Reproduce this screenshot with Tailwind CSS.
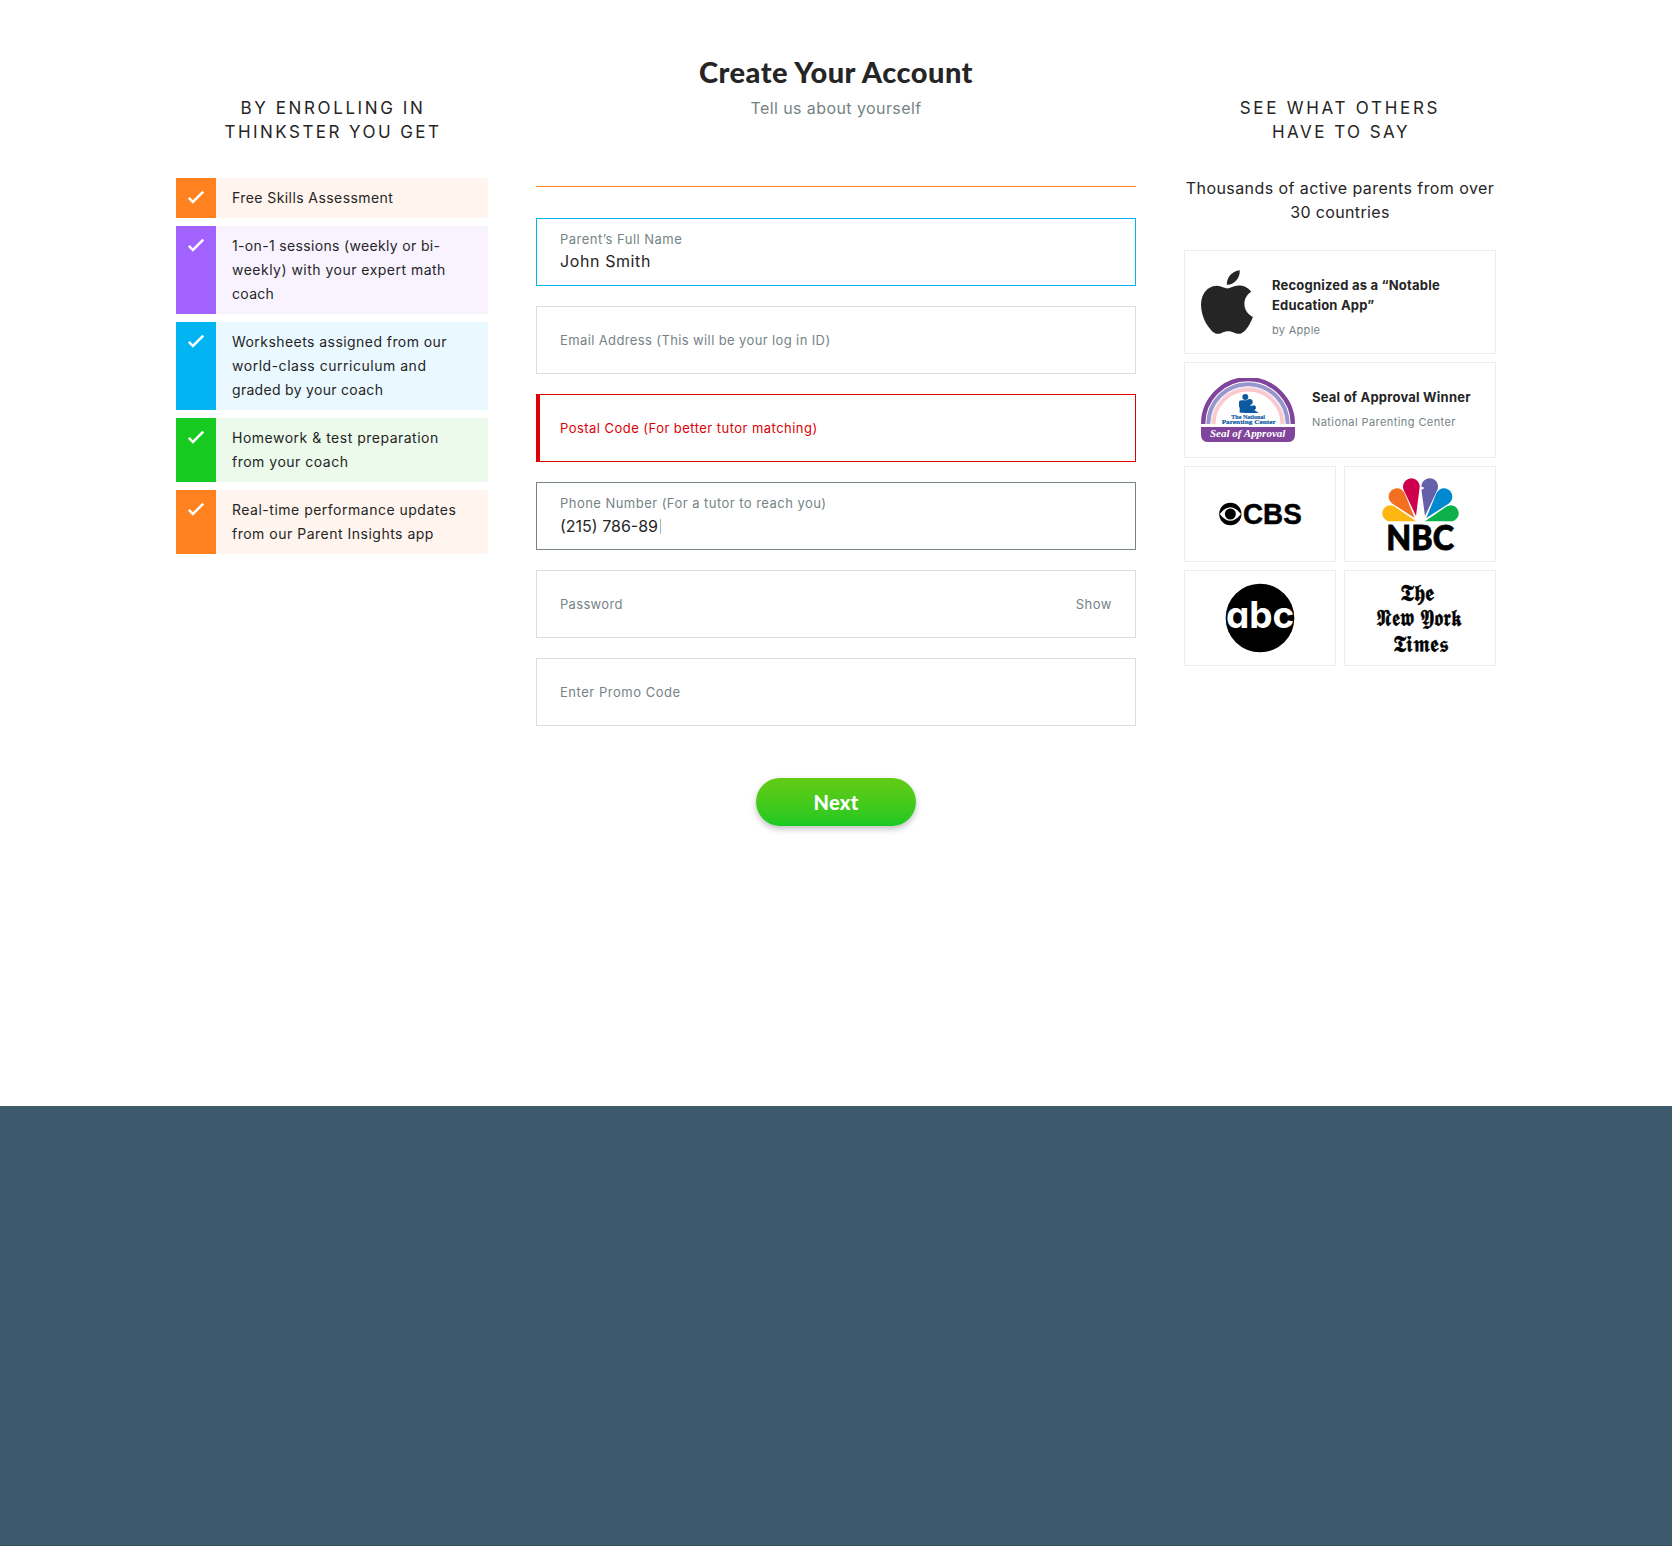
<!DOCTYPE html>
<html lang="en">
<head>
<meta charset="utf-8">
<title>Create Your Account</title>
<script src="https://cdn.jsdelivr.net/npm/@tailwindcss/browser@4"></script>
</head>
<body class="flex min-h-[1546px] flex-col bg-white font-['Inter',sans-serif] text-[#252525]">
<svg class="hidden">
  <symbol id="check" viewBox="0 0 40 40"><path d="M12.9 19.9l4 4.1L27.3 13.6" fill="none" stroke="#fff" stroke-width="2.5"/></symbol>
</svg>

<main class="mx-auto grid h-[1106px] w-[1320px] grid-cols-[312px_600px_312px] items-start gap-12">

  <!-- Benefits -->
  <aside class="pt-24">
    <h2 class="text-center text-[17px] leading-6"><span class="block pl-0.5 tracking-[2.6px]">BY ENROLLING IN</span><span class="block pl-0.5 tracking-[2.44px]">THINKSTER YOU GET</span></h2>
    <ul class="mt-[34px] flex flex-col gap-2 text-sm leading-6">
      <li class="flex bg-[#fff4ee]">
        <div class="w-10 shrink-0 bg-[#ff8120]"><svg class="size-10"><use href="#check"/></svg></div>
        <p class="px-4 py-2 tracking-[0.42px]">Free Skills Assessment</p>
      </li>
      <li class="flex bg-[#f8f3ff]">
        <div class="w-10 shrink-0 bg-[#a162ff]"><svg class="size-10"><use href="#check"/></svg></div>
        <p class="px-4 py-2"><span class="block tracking-[0.34px]">1-on-1 sessions (weekly or bi-</span><span class="block tracking-[0.48px]">weekly) with your expert math</span><span class="block tracking-[0.3px]">coach</span></p>
      </li>
      <li class="flex bg-[#eaf8ff]">
        <div class="w-10 shrink-0 bg-[#02b4f2]"><svg class="size-10"><use href="#check"/></svg></div>
        <p class="px-4 py-2"><span class="block tracking-[0.44px]">Worksheets assigned from our</span><span class="block tracking-[0.52px]">world-class curriculum and</span><span class="block tracking-[0.3px]">graded by your coach</span></p>
      </li>
      <li class="flex bg-[#ebfaeb]">
        <div class="w-10 shrink-0 bg-[#17ca20]"><svg class="size-10"><use href="#check"/></svg></div>
        <p class="px-4 py-2 tracking-[0.5px]">Homework &amp; test preparation<br>from your coach</p>
      </li>
      <li class="flex bg-[#fff4ee]">
        <div class="w-10 shrink-0 bg-[#ff8120]"><svg class="size-10"><use href="#check"/></svg></div>
        <p class="px-4 py-2 tracking-[0.5px]">Real-time performance updates<br>from our Parent Insights app</p>
      </li>
    </ul>
  </aside>

  <!-- Form -->
  <section class="flex flex-col items-center pt-14">
    <h1 class="font-['Lato',sans-serif] text-[29px] leading-8 font-black tracking-[0.48px]">Create Your Account</h1>
    <p class="mt-2 text-base leading-6 tracking-[0.42px] text-[#758386]">Tell us about yourself</p>
    <hr class="mt-[66px] h-px w-full border-0 bg-[#ff8120]">
    <form class="mt-[31px] flex w-full flex-col gap-5 text-[13px] leading-4 text-[#758386]">
      <div class="flex h-[68px] flex-col gap-0.5 border border-[#02b4f2] px-[23px] pt-3">
        <span class="tracking-[0.48px]">Parent’s Full Name</span>
        <span class="text-base leading-6 tracking-[0.6px] text-[#252525]">John Smith</span>
      </div>
      <div class="flex h-[68px] items-center border border-[#dcdcdc] px-[23px]"><span class="tracking-[0.38px]">Email Address (This will be your log in ID)</span></div>
      <div class="flex h-[68px] items-center border border-l-4 border-[#dd0005] pr-[23px] pl-5 text-[#dd0005]"><span class="tracking-[0.46px]">Postal Code (For better tutor matching)</span></div>
      <div class="flex h-[68px] flex-col gap-[3px] border border-[#758386] px-[23px] pt-3">
        <span class="tracking-[0.46px]">Phone Number (For a tutor to reach you)</span>
        <span class="flex items-center gap-[2px] text-base leading-6 text-[#252525]">(215) 786-89<i class="h-[15px] w-px bg-[#a9b1b3]"></i></span>
      </div>
      <div class="flex h-[68px] items-center justify-between border border-[#dcdcdc] px-[23px]"><span class="tracking-[0.32px]">Password</span><span class="tracking-[0.5px]">Show</span></div>
      <div class="flex h-[68px] items-center border border-[#dcdcdc] px-[23px]"><span class="tracking-[0.53px]">Enter Promo Code</span></div>
    </form>
    <button class="mt-[52px] h-12 w-40 rounded-full bg-linear-to-b from-[#62cb14] to-[#15c922] font-['Lato',sans-serif] text-[20px] leading-6 font-black tracking-[0.3px] text-white shadow-[0_3px_6px_rgba(0,0,0,0.25)]">Next</button>
  </section>

  <!-- Press and awards -->
  <aside class="pt-24">
    <h2 class="text-center text-[17px] leading-6"><span class="block tracking-[2.72px]">SEE WHAT OTHERS</span><span class="block pl-0.5 tracking-[2.45px]">HAVE TO SAY</span></h2>
    <p class="mt-8 -mx-1 text-center text-base leading-6"><span class="block tracking-[0.42px]">Thousands of active parents from over</span><span class="block tracking-[0.34px]">30 countries</span></p>
    <div class="mt-[26px] grid grid-cols-2 gap-2">
      <div class="col-span-2 flex h-26 border border-[#ececec] pl-4">
        <svg class="mt-[19px] h-16 w-[52px] shrink-0" viewBox="2.2 0 19.6 24" fill="#252525"><path d="M12.152 6.896c-.948 0-2.415-1.078-3.96-1.04-2.04.027-3.91 1.183-4.961 3.014-2.117 3.675-.546 9.103 1.519 12.09 1.013 1.454 2.208 3.09 3.792 3.039 1.52-.065 2.09-.987 3.935-.987 1.831 0 2.35.987 3.96.948 1.637-.026 2.676-1.48 3.676-2.948 1.156-1.688 1.636-3.325 1.662-3.415-.039-.013-3.182-1.221-3.22-4.857-.026-3.04 2.48-4.494 2.597-4.559-1.429-2.09-3.623-2.324-4.39-2.376-2-.156-3.675 1.09-4.61 1.09zM15.53 3.83c.843-1.012 1.4-2.427 1.245-3.83-1.207.052-2.662.805-3.532 1.818-.78.896-1.454 2.338-1.273 3.714 1.338.104 2.715-.688 3.559-1.701"/></svg>
        <div class="pt-6 pl-[19px]">
          <h3 class="text-[13px] leading-5 font-bold"><span class="block tracking-[0.2px]">Recognized as a “Notable</span><span class="block tracking-[0.2px]">Education App”</span></h3>
          <p class="mt-[7px] text-[11px] leading-4 tracking-[0.3px] text-[#758386]">by Apple</p>
        </div>
      </div>
      <div class="col-span-2 flex h-24 border border-[#ececec] pl-4">
        <svg class="mt-[15px] h-16 w-[94px] shrink-0" viewBox="93 84 282 192" role="img" aria-label="The National Parenting Center Seal of Approval">
          <g fill="none">
            <path d="M99.5 222a134.5 134.5 0 0 1 269 0" stroke="#81449b" stroke-width="13"/>
            <path d="M115 222a119 119 0 0 1 238 0" stroke="#9894cc" stroke-width="12"/>
            <path d="M123 222a111 111 0 0 1 222 0" stroke="#e3e1f1" stroke-width="3"/>
            <path d="M131 222a103 103 0 0 1 206 0" stroke="#fbc8cf" stroke-width="11"/>
          </g>
          <path d="M93 231h282v23q0 22-22 22H115q-22 0-22-22z" fill="#81449b"/>
          <g fill="#0c599f">
            <circle cx="226" cy="141" r="9"/><path d="M207 158q0-7 8-7h20q5 0 5 7v30h-31v-16h-2z"/>
            <circle cx="239" cy="156" r="9"/><path d="M225 170q14-10 26 2l5 17h-34z"/>
            <circle cx="251" cy="173" r="7"/><path d="M240 184q12-8 26 5h-26z"/>
          </g>
          <g fill="#0c599f" font-family="'Liberation Serif',serif" font-weight="700" stroke="#0c599f" stroke-width=".5">
            <text x="184" y="206" font-size="18" textLength="101" lengthAdjust="spacingAndGlyphs">The National</text>
            <text x="155" y="223" font-size="20" textLength="162" lengthAdjust="spacingAndGlyphs">Parenting Center</text>
          </g>
          <text x="120" y="262" font-size="32" font-family="'Liberation Serif',serif" font-style="italic" font-weight="700" fill="#fff" textLength="226" lengthAdjust="spacingAndGlyphs">Seal of Approval</text>
        </svg>
        <div class="pt-6 pl-[17px]">
          <h3 class="text-[13px] leading-5 font-bold tracking-[0.22px]">Seal of Approval Winner</h3>
          <p class="mt-[7px] text-[11px] leading-4 tracking-[0.42px] text-[#758386]">National Parenting Center</p>
        </div>
      </div>
      <div class="h-24 border border-[#ececec]">
        <svg class="size-full" viewBox="45 36 450 282">
          <circle cx="181" cy="177" r="33.5"/>
          <path d="M149 177q32-41 64 0q-32 41-64 0z" fill="#fff"/>
          <circle cx="181" cy="177" r="16.5"/>
          <text x="219" y="207" font-family="'Liberation Sans',sans-serif" font-weight="700" font-size="87" textLength="176" lengthAdjust="spacingAndGlyphs" stroke="#000" stroke-width="1.5">CBS</text>
        </svg>
      </div>
      <div class="h-24 border border-[#ececec]">
        <svg class="size-full" viewBox="525 35 450 282">
          <path fill="#fcb711" d="M738 198H661A24 24 0 1 1 674.6 154.3z"/>
          <path fill="#f37021" d="M734 188L667.4 145A25 25 0 1 1 704.2 114.6z"/>
          <path fill="#cc004c" d="M738 182L701.4 104.7A25 25 0 1 1 748.8 97.2z"/>
          <path fill="#6460aa" d="M765 182L754.2 103l7-3v-4l-7-1.5A25 25 0 1 1 801.6 104.7z"/>
          <path fill="#0089d0" d="M769 188L798.8 114.6A25 25 0 1 1 835.6 145z"/>
          <path fill="#0db14b" d="M765 198L828.4 154.3A24 24 0 1 1 842 198z"/>
          <text x="649" y="285" font-family="'Lato',sans-serif" font-weight="900" font-size="103" textLength="203" lengthAdjust="spacingAndGlyphs" stroke="#000" stroke-width="2.5">NBC</text>
        </svg>
      </div>
      <div class="h-24 border border-[#ececec]">
        <svg class="size-full" viewBox="45 347 450 282">
          <circle cx="270" cy="488" r="103"/>
          <text class="[font-feature-settings:'cv11']" x="168" y="518" font-family="'Inter',sans-serif" font-weight="700" font-size="110" fill="#fff" textLength="205" lengthAdjust="spacingAndGlyphs">abc</text>
        </svg>
      </div>
      <div class="h-24 border border-[#ececec]">
        <svg class="size-full" viewBox="525 347 450 282" font-family="'DejaVu Sans',serif" font-size="70" stroke="#000" stroke-width="1.5" role="img" aria-label="The New York Times">
          <text x="690" y="436" textLength="102" lengthAdjust="spacingAndGlyphs">𝕿𝖍𝖊</text>
          <text x="619" y="512" textLength="258" lengthAdjust="spacingAndGlyphs">𝕹𝖊𝖜 𝖄𝖔𝖗𝖐</text>
          <text x="669" y="589" textLength="165" lengthAdjust="spacingAndGlyphs">𝕿𝖎𝖒𝖊𝖘</text>
        </svg>
      </div>
    </div>
  </aside>
</main>

<footer class="grow border-b border-[#38525f] bg-[#3c5a6b]"></footer>
</body>
</html>
